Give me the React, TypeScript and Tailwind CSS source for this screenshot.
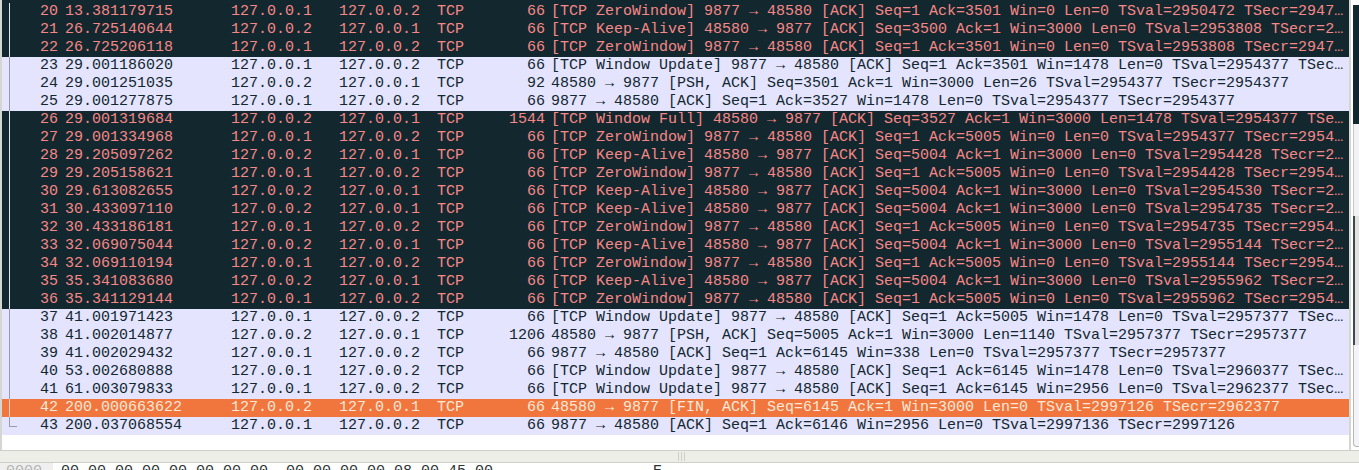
const dark = "bg-[#12272e] text-[#f78787]";
const light = "bg-[#e4e4ff] text-[#12272e]";
const fin = "bg-[#f0763e] text-[#ffe8d8]";

type Row = [number, string, string, string, string, string, string];

const rows: Row[] = [
  [20, "13.381179715", "127.0.0.1", "127.0.0.2", "66", "[TCP ZeroWindow] 9877 → 48580 [ACK] Seq=1 Ack=3501 Win=0 Len=0 TSval=2950472 TSecr=2947472", dark],
  [21, "26.725140644", "127.0.0.2", "127.0.0.1", "66", "[TCP Keep-Alive] 48580 → 9877 [ACK] Seq=3500 Ack=1 Win=3000 Len=0 TSval=2953808 TSecr=2947472", dark],
  [22, "26.725206118", "127.0.0.1", "127.0.0.2", "66", "[TCP ZeroWindow] 9877 → 48580 [ACK] Seq=1 Ack=3501 Win=0 Len=0 TSval=2953808 TSecr=2947472", dark],
  [23, "29.001186020", "127.0.0.1", "127.0.0.2", "66", "[TCP Window Update] 9877 → 48580 [ACK] Seq=1 Ack=3501 Win=1478 Len=0 TSval=2954377 TSecr=2953808", light],
  [24, "29.001251035", "127.0.0.2", "127.0.0.1", "92", "48580 → 9877 [PSH, ACK] Seq=3501 Ack=1 Win=3000 Len=26 TSval=2954377 TSecr=2954377", light],
  [25, "29.001277875", "127.0.0.1", "127.0.0.2", "66", "9877 → 48580 [ACK] Seq=1 Ack=3527 Win=1478 Len=0 TSval=2954377 TSecr=2954377", light],
  [26, "29.001319684", "127.0.0.2", "127.0.0.1", "1544", "[TCP Window Full] 48580 → 9877 [ACK] Seq=3527 Ack=1 Win=3000 Len=1478 TSval=2954377 TSecr=2954377", dark],
  [27, "29.001334968", "127.0.0.1", "127.0.0.2", "66", "[TCP ZeroWindow] 9877 → 48580 [ACK] Seq=1 Ack=5005 Win=0 Len=0 TSval=2954377 TSecr=2954377", dark],
  [28, "29.205097262", "127.0.0.2", "127.0.0.1", "66", "[TCP Keep-Alive] 48580 → 9877 [ACK] Seq=5004 Ack=1 Win=3000 Len=0 TSval=2954428 TSecr=2954377", dark],
  [29, "29.205158621", "127.0.0.1", "127.0.0.2", "66", "[TCP ZeroWindow] 9877 → 48580 [ACK] Seq=1 Ack=5005 Win=0 Len=0 TSval=2954428 TSecr=2954377", dark],
  [30, "29.613082655", "127.0.0.2", "127.0.0.1", "66", "[TCP Keep-Alive] 48580 → 9877 [ACK] Seq=5004 Ack=1 Win=3000 Len=0 TSval=2954530 TSecr=2954428", dark],
  [31, "30.433097110", "127.0.0.2", "127.0.0.1", "66", "[TCP Keep-Alive] 48580 → 9877 [ACK] Seq=5004 Ack=1 Win=3000 Len=0 TSval=2954735 TSecr=2954428", dark],
  [32, "30.433186181", "127.0.0.1", "127.0.0.2", "66", "[TCP ZeroWindow] 9877 → 48580 [ACK] Seq=1 Ack=5005 Win=0 Len=0 TSval=2954735 TSecr=2954377", dark],
  [33, "32.069075044", "127.0.0.2", "127.0.0.1", "66", "[TCP Keep-Alive] 48580 → 9877 [ACK] Seq=5004 Ack=1 Win=3000 Len=0 TSval=2955144 TSecr=2954735", dark],
  [34, "32.069110194", "127.0.0.1", "127.0.0.2", "66", "[TCP ZeroWindow] 9877 → 48580 [ACK] Seq=1 Ack=5005 Win=0 Len=0 TSval=2955144 TSecr=2954377", dark],
  [35, "35.341083680", "127.0.0.2", "127.0.0.1", "66", "[TCP Keep-Alive] 48580 → 9877 [ACK] Seq=5004 Ack=1 Win=3000 Len=0 TSval=2955962 TSecr=2955144", dark],
  [36, "35.341129144", "127.0.0.1", "127.0.0.2", "66", "[TCP ZeroWindow] 9877 → 48580 [ACK] Seq=1 Ack=5005 Win=0 Len=0 TSval=2955962 TSecr=2954377", dark],
  [37, "41.001971423", "127.0.0.1", "127.0.0.2", "66", "[TCP Window Update] 9877 → 48580 [ACK] Seq=1 Ack=5005 Win=1478 Len=0 TSval=2957377 TSecr=2955962", light],
  [38, "41.002014877", "127.0.0.2", "127.0.0.1", "1206", "48580 → 9877 [PSH, ACK] Seq=5005 Ack=1 Win=3000 Len=1140 TSval=2957377 TSecr=2957377", light],
  [39, "41.002029432", "127.0.0.1", "127.0.0.2", "66", "9877 → 48580 [ACK] Seq=1 Ack=6145 Win=338 Len=0 TSval=2957377 TSecr=2957377", light],
  [40, "53.002680888", "127.0.0.1", "127.0.0.2", "66", "[TCP Window Update] 9877 → 48580 [ACK] Seq=1 Ack=6145 Win=1478 Len=0 TSval=2960377 TSecr=2957377", light],
  [41, "61.003079833", "127.0.0.1", "127.0.0.2", "66", "[TCP Window Update] 9877 → 48580 [ACK] Seq=1 Ack=6145 Win=2956 Len=0 TSval=2962377 TSecr=2957377", light],
  [42, "200.000663622", "127.0.0.2", "127.0.0.1", "66", "48580 → 9877 [FIN, ACK] Seq=6145 Ack=1 Win=3000 Len=0 TSval=2997126 TSecr=2962377", fin],
  [43, "200.037068554", "127.0.0.1", "127.0.0.2", "66", "9877 → 48580 [ACK] Seq=1 Ack=6146 Win=2956 Len=0 TSval=2997136 TSecr=2997126", light],
];

function PacketRow({ row, last }: { row: Row; last: boolean }) {
  const [no, time, src, dst, len, info, color] = row;
  return (
    <div className={`flex h-[18px] items-center leading-[18px] whitespace-pre ${color}`}>
      <div className="relative h-full w-[16px] shrink-0">
        {last ? (
          <>
            <div className="absolute left-[7px] top-0 h-[9px] w-px bg-[#9a9aa8]" />
            <div className="absolute left-[7px] top-[9px] h-px w-[8px] bg-[#9a9aa8]" />
          </>
        ) : (
          <div className={`absolute left-[7px] top-0 h-full w-px ${color === dark ? "bg-[#dfe8ea]" : color === fin ? "bg-[#ffd9c4]" : "bg-[#9a9aa8]"}`} />
        )}
      </div>
      <div className="w-[40px] shrink-0 text-right">{no}</div>
      <div className="ml-[7px] w-[166px] shrink-0">{time}</div>
      <div className="w-[108px] shrink-0">{src}</div>
      <div className="w-[98px] shrink-0">{dst}</div>
      <div className="w-[40px] shrink-0">TCP</div>
      <div className="w-[68px] shrink-0 text-right">{len}</div>
      <div className="ml-[6px] w-[794px] shrink-0 truncate">{info}</div>
    </div>
  );
}

export default function App() {
  return (
    <div className="flex h-[470px] w-[1359px] flex-col overflow-hidden bg-[#f2f1ee] font-['Liberation_Mono',monospace] text-[15px]">
      <div className="flex h-[451px] shrink-0 border-b border-[#cfcec8] bg-white">
        <div className="w-[1351px] shrink-0 border-x-2 border-r-[#d4d6d2] border-l-[#d4d6d2]">
          <div className="h-[3px] bg-[#12272e]" />
          {rows.map((row, i) => (
            <PacketRow key={row[0]} row={row} last={i === rows.length - 1} />
          ))}
        </div>
        <div className="ml-[2px] flex flex-1 flex-col pt-[5px] pb-[3px]">
          <div className="h-[119px] shrink-0 bg-[#12272e]" />
          <div className="h-[92px] shrink-0 border-l border-[#c8c8c4] bg-[#f2f2f6]" />
          <div className="h-[129px] shrink-0 border-l-2 border-[#3a4a4e] bg-[#e2e2e2]" />
          <div className="flex-1 rounded-bl-[4px] border-b border-l border-[#b8b8b2] bg-[#f4f4f8]" />
        </div>
      </div>
      <div className="flex h-[12px] shrink-0 justify-center gap-[2px] border-b border-[#cfcec8] bg-[#eeeee8] py-[1px] pr-[-4px]">
        <div className="ml-[4px] w-px bg-[#cfcec8]" />
        <div className="w-px bg-[#cfcec8]" />
        <div className="w-px bg-[#cfcec8]" />
      </div>
      <div className="flex h-[18px] shrink-0 bg-white text-[#2e3436]">
        <div className="w-[53px] shrink-0 bg-[#efefef] pl-[6px] leading-[18px] text-[#b5b5b5]">0000</div>
        <div className="ml-[8px] w-[592px] shrink-0 leading-[18px] whitespace-pre">00 00 00 00 00 00 00 00  00 00 00 00 08 00 45 00</div>
        <div className="leading-[18px]">E</div>
      </div>
    </div>
  );
}
